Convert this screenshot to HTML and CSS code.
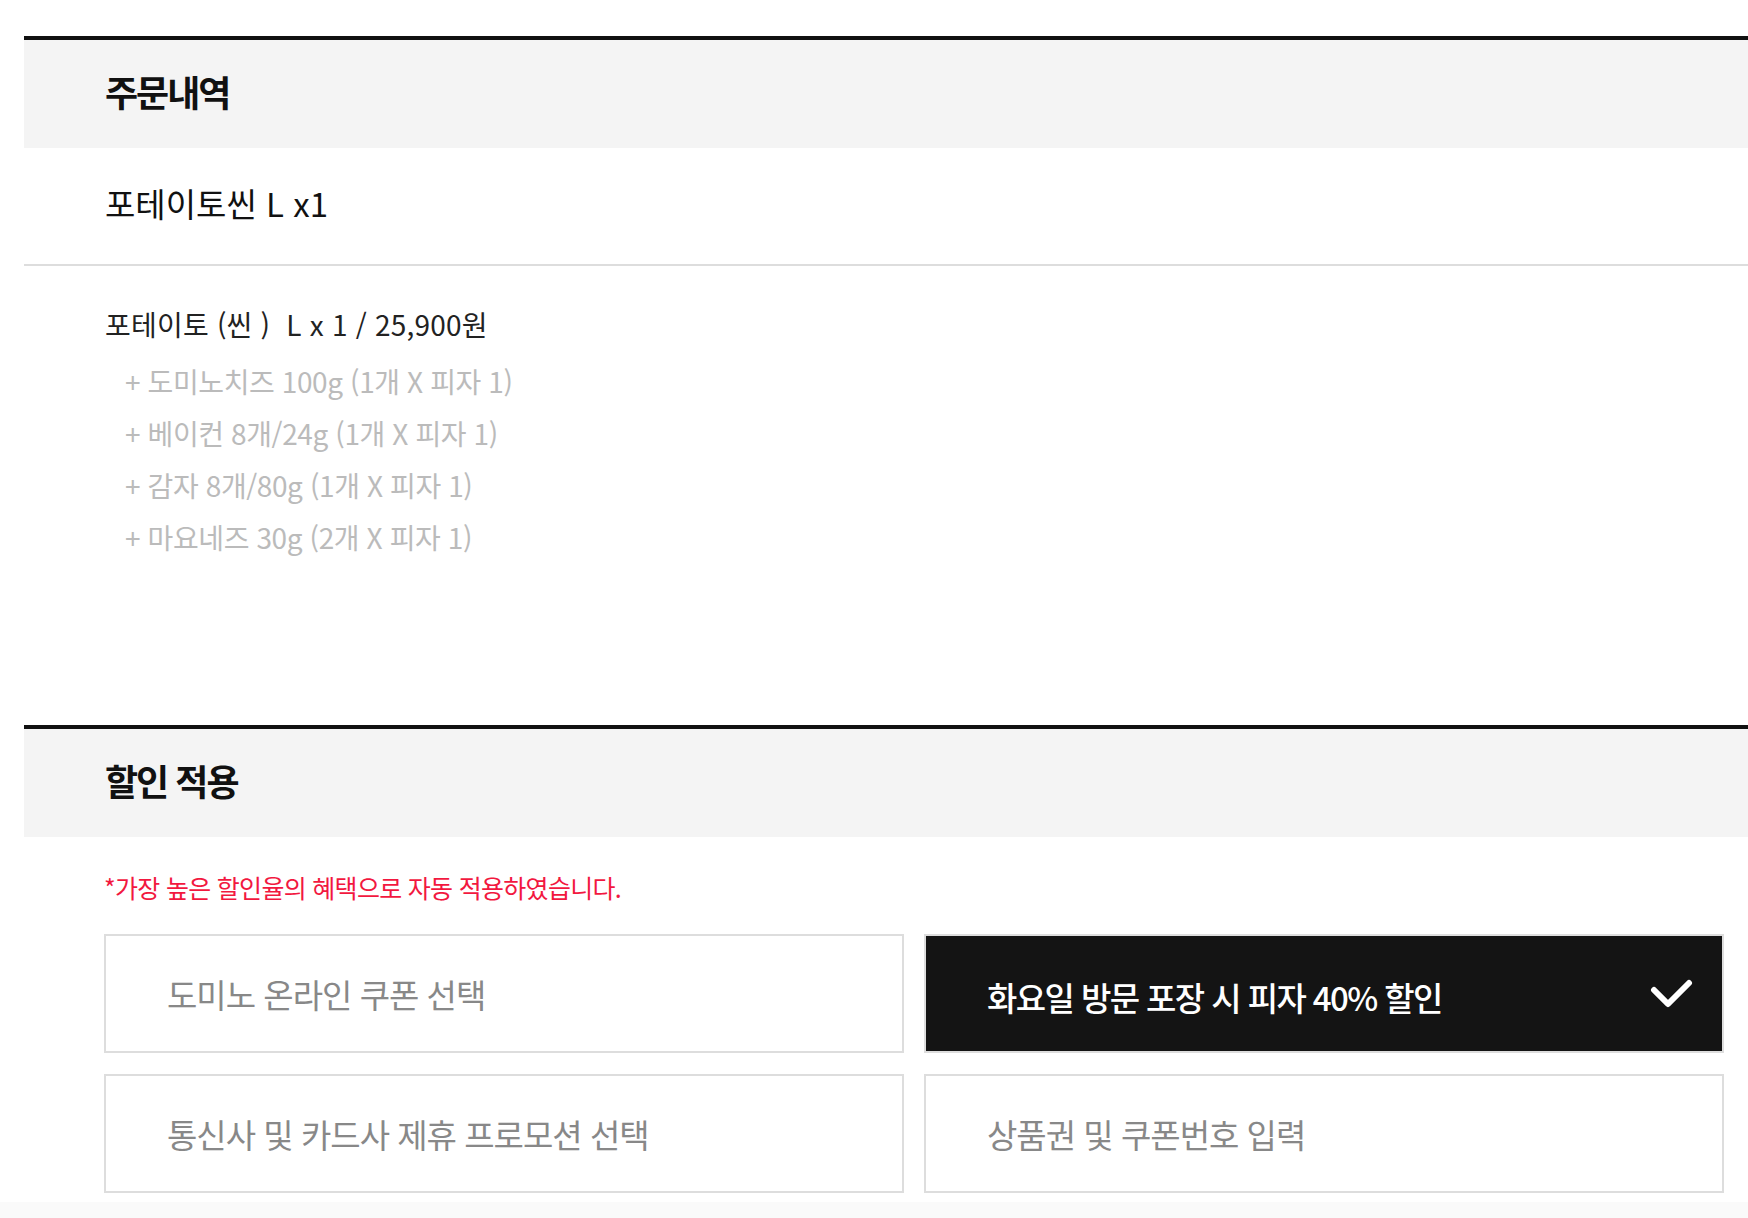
FILE: index.html
```html
<!DOCTYPE html>
<html lang="ko">
<head>
<meta charset="UTF-8">
<meta name="viewport" content="width=device-width, initial-scale=1.0">
<title>주문내역 / 할인 적용</title>
<link rel="stylesheet" href="styles.css">
</head>
<body>
<div class="page">
    <section class="block order">
        <div class="block-head"><h2>주문내역</h2></div>
        <div class="order-name">포테이토씬 L x1</div>
        <div class="order-detail">
            <p class="main-line">포테이토 (씬 ) &nbsp;L x 1 / 25,900원</p>
            <p class="topping">+ 도미노치즈 100g (1개 X 피자 1)</p>
            <p class="topping">+ 베이컨 8개/24g (1개 X 피자 1)</p>
            <p class="topping">+ 감자 8개/80g (1개 X 피자 1)</p>
            <p class="topping">+ 마요네즈 30g (2개 X 피자 1)</p>
        </div>
    </section>

    <section class="block discount">
        <div class="block-head"><h2>할인 적용</h2></div>
        <div class="discount-body">
            <p class="notice">*가장 높은 할인율의 혜택으로 자동 적용하였습니다.</p>
            <div class="options">
                <div class="option">도미노 온라인 쿠폰 선택</div>
                <div class="option active">
                    <span class="option-label">화요일 방문 포장 시 피자 40% 할인</span>
                    <svg class="check" width="44" height="32" viewBox="0 0 44 32">
                        <polyline points="5,12 19,26 40,5" fill="none" stroke="#fff" stroke-width="6" stroke-linecap="round" stroke-linejoin="round"/>
                    </svg>
                </div>
                <div class="option">통신사 및 카드사 제휴 프로모션 선택</div>
                <div class="option">상품권 및 쿠폰번호 입력</div>
            </div>
        </div>
    </section>
</div>
<div class="page-foot"></div>
</body>
</html>
```

FILE: styles.css
```css
html, body {
    overflow-x: hidden;
}

body {
    margin: 0;
    font-family: "Noto Sans CJK KR", "Noto Sans", sans-serif;
    color: #111;
    background: #fff;
}

.page {
    padding: 36px 0 9px 24px;
}

.block {
    width: 1780px;
    border-top: 4px solid #111;
}

.block-head {
    box-sizing: border-box;
    height: 108px;
    display: flex;
    align-items: center;
    padding: 0 0 7px 81px;
    background-color: #f4f4f4;
}

.block-head h2 {
    margin: 0;
    font-size: 36px;
    font-weight: bold;
    letter-spacing: -2px;
}

.order {
    padding-bottom: 162px;
}

.order-name {
    box-sizing: border-box;
    height: 118px;
    display: flex;
    align-items: center;
    padding: 0 0 6px 81px;
    font-size: 33px;
    border-bottom: 2px solid #ddd;
}

.order-detail {
    padding: 36px 0 0 81px;
}

.order-detail p {
    margin: 0;
}

.main-line {
    font-size: 28px;
    line-height: 44px;
    letter-spacing: 0.2px;
    color: #222;
    margin-bottom: 9px !important;
}

.topping {
    font-size: 28px;
    line-height: 52px;
    letter-spacing: -0.4px;
    color: #bbb;
    padding-left: 20px;
}

.discount-body {
    padding: 32px 0 0 80px;
}

.notice {
    margin: 0 0 29px;
    font-size: 25px;
    line-height: 36px;
    letter-spacing: -0.7px;
    color: #f2183f;
}

.options {
    display: grid;
    grid-template-columns: 800px 800px;
    column-gap: 20px;
    row-gap: 21px;
}

.option {
    box-sizing: border-box;
    height: 119px;
    display: flex;
    align-items: center;
    justify-content: space-between;
    padding: 0 29px 0 61px;
    border: 2px solid #ddd;
    font-size: 33px;
    letter-spacing: -1px;
    color: #888;
}

.option.active {
    background-color: #141414;
    color: #fff;
    font-weight: 500;
}

.option.active .option-label {
    padding-top: 6px;
    letter-spacing: -1.6px;
}

.page-foot {
    height: 40px;
    background-color: #fafafa;
}
```
